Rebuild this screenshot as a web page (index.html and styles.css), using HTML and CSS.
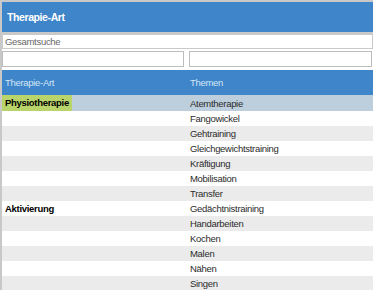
FILE: index.html
```html
<!DOCTYPE html>
<html lang="de">
<head>
  <meta charset="UTF-8">
  <title>Therapie-Art</title>
  <link rel="stylesheet" href="styles.css">
</head>
<body>

  <div class="panel">
    <div class="panel-title">Therapie-Art</div>

    <div class="search">
      <input type="text" class="search-input" placeholder="Gesamtsuche">
    </div>

    <div class="filters">
      <input type="text" class="filter-input">
      <input type="text" class="filter-input">
    </div>

    <table class="grid">
      <thead>
        <tr>
          <th class="col-art">Therapie-Art</th>
          <th>Themen</th>
        </tr>
      </thead>
      <tbody>
        <tr class="selected">
          <td class="group"><span class="mark">Physiotherapie</span></td>
          <td>Atemtherapie</td>
        </tr>
        <tr><td></td><td>Fangowickel</td></tr>
        <tr class="alt"><td></td><td>Gehtraining</td></tr>
        <tr><td></td><td>Gleichgewichtstraining</td></tr>
        <tr class="alt"><td></td><td>Kräftigung</td></tr>
        <tr><td></td><td>Mobilisation</td></tr>
        <tr class="alt"><td></td><td>Transfer</td></tr>
        <tr><td class="group">Aktivierung</td><td>Gedächtnistraining</td></tr>
        <tr class="alt"><td></td><td>Handarbeiten</td></tr>
        <tr><td></td><td>Kochen</td></tr>
        <tr class="alt"><td></td><td>Malen</td></tr>
        <tr><td></td><td>Nähen</td></tr>
        <tr class="alt"><td></td><td>Singen</td></tr>
      </tbody>
    </table>
  </div>

</body>
</html>
```

FILE: styles.css
```css
body {
  margin: 0;
  font-family: "Liberation Sans", Arial, sans-serif;
  background-color: #ffffff;
}
.panel {
  border-top: 2px solid #c8c8c8;
  border-left: 2px solid #c8c8c8;
  height: 288px;
  overflow: hidden;
}
.panel-title {
  background-color: #3f85c9;
  color: white;
  font-weight: bold;
  font-size: 10.5px;
  letter-spacing: -0.4px;
  height: 30px;
  line-height: 30px;
  padding-left: 5px;
  border-bottom: 2px solid #c9c9c9;
}
.search-input {
  display: block;
  width: 100%;
  box-sizing: border-box;
  height: 15px;
  margin: 0;
  padding: 0 2px;
  border: 1px solid #c9c9c9;
  font-family: inherit;
  font-size: 9.5px;
  letter-spacing: -0.3px;
  color: #555;
}
.search-input::placeholder {
  color: #666;
}
.filters {
  display: grid;
  grid-template-columns: 182px 1fr;
  gap: 5px;
  padding: 2px 2px 3px 0;
}
.filter-input {
  box-sizing: border-box;
  height: 16px;
  margin: 0;
  border: 1px solid #bdbdbd;
}
.grid {
  width: 100%;
  border-collapse: collapse;
  font-size: 9.5px;
  line-height: 11px;
  letter-spacing: -0.3px;
  color: #2b2b2b;
}
.grid th {
  background-color: #3f85c9;
  color: #d4e6f8;
  font-weight: normal;
  text-align: left;
  height: 25px;
  padding: 0 0 0 3px;
}
.grid th.col-art {
  width: 180px;
}
.grid td {
  height: 15px;
  padding: 0 0 0 3px;
  white-space: nowrap;
}
.grid td + td,
.grid th + th {
  padding-left: 5px;
}
.grid tr.alt td {
  background-color: #ebebeb;
}
.grid tr.selected td {
  background-color: #bdcedd;
  height: 16px;
}
.grid td.group {
  font-weight: bold;
  color: #000;
}
.mark {
  display: inline-block;
  vertical-align: middle;
  background-color: #b9d46a;
  margin-left: -3px;
  padding: 2px 3px 3px;
}
```
